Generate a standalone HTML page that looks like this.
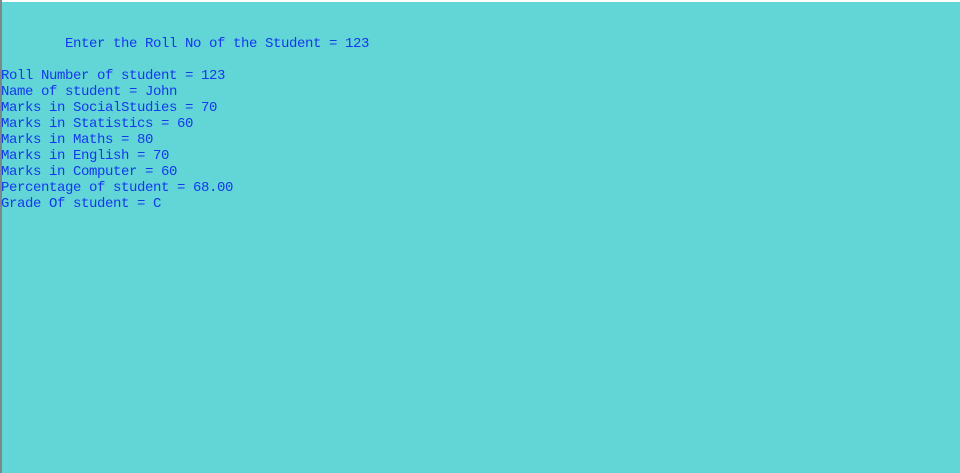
<!DOCTYPE html>
<html><head><style>
html,body{margin:0;padding:0;}
body{width:960px;height:473px;overflow:hidden;background:#62d6d6;position:relative;}
.top{position:absolute;left:0;top:0;width:960px;height:2px;background:#fff;}
.left{position:absolute;left:0;top:0;width:2px;height:473px;background:#7a8a8a;}
pre{position:absolute;left:1px;top:36px;margin:0;font-family:"Liberation Mono",monospace;font-size:14px;letter-spacing:-0.4px;line-height:16px;color:#1438ee;}
</style></head><body>
<div class="top"></div><div class="left"></div>
<pre>        Enter the Roll No of the Student = 123

Roll Number of student = 123
Name of student = John
Marks in SocialStudies = 70
Marks in Statistics = 60
Marks in Maths = 80
Marks in English = 70
Marks in Computer = 60
Percentage of student = 68.00
Grade Of student = C</pre>
</body></html>
